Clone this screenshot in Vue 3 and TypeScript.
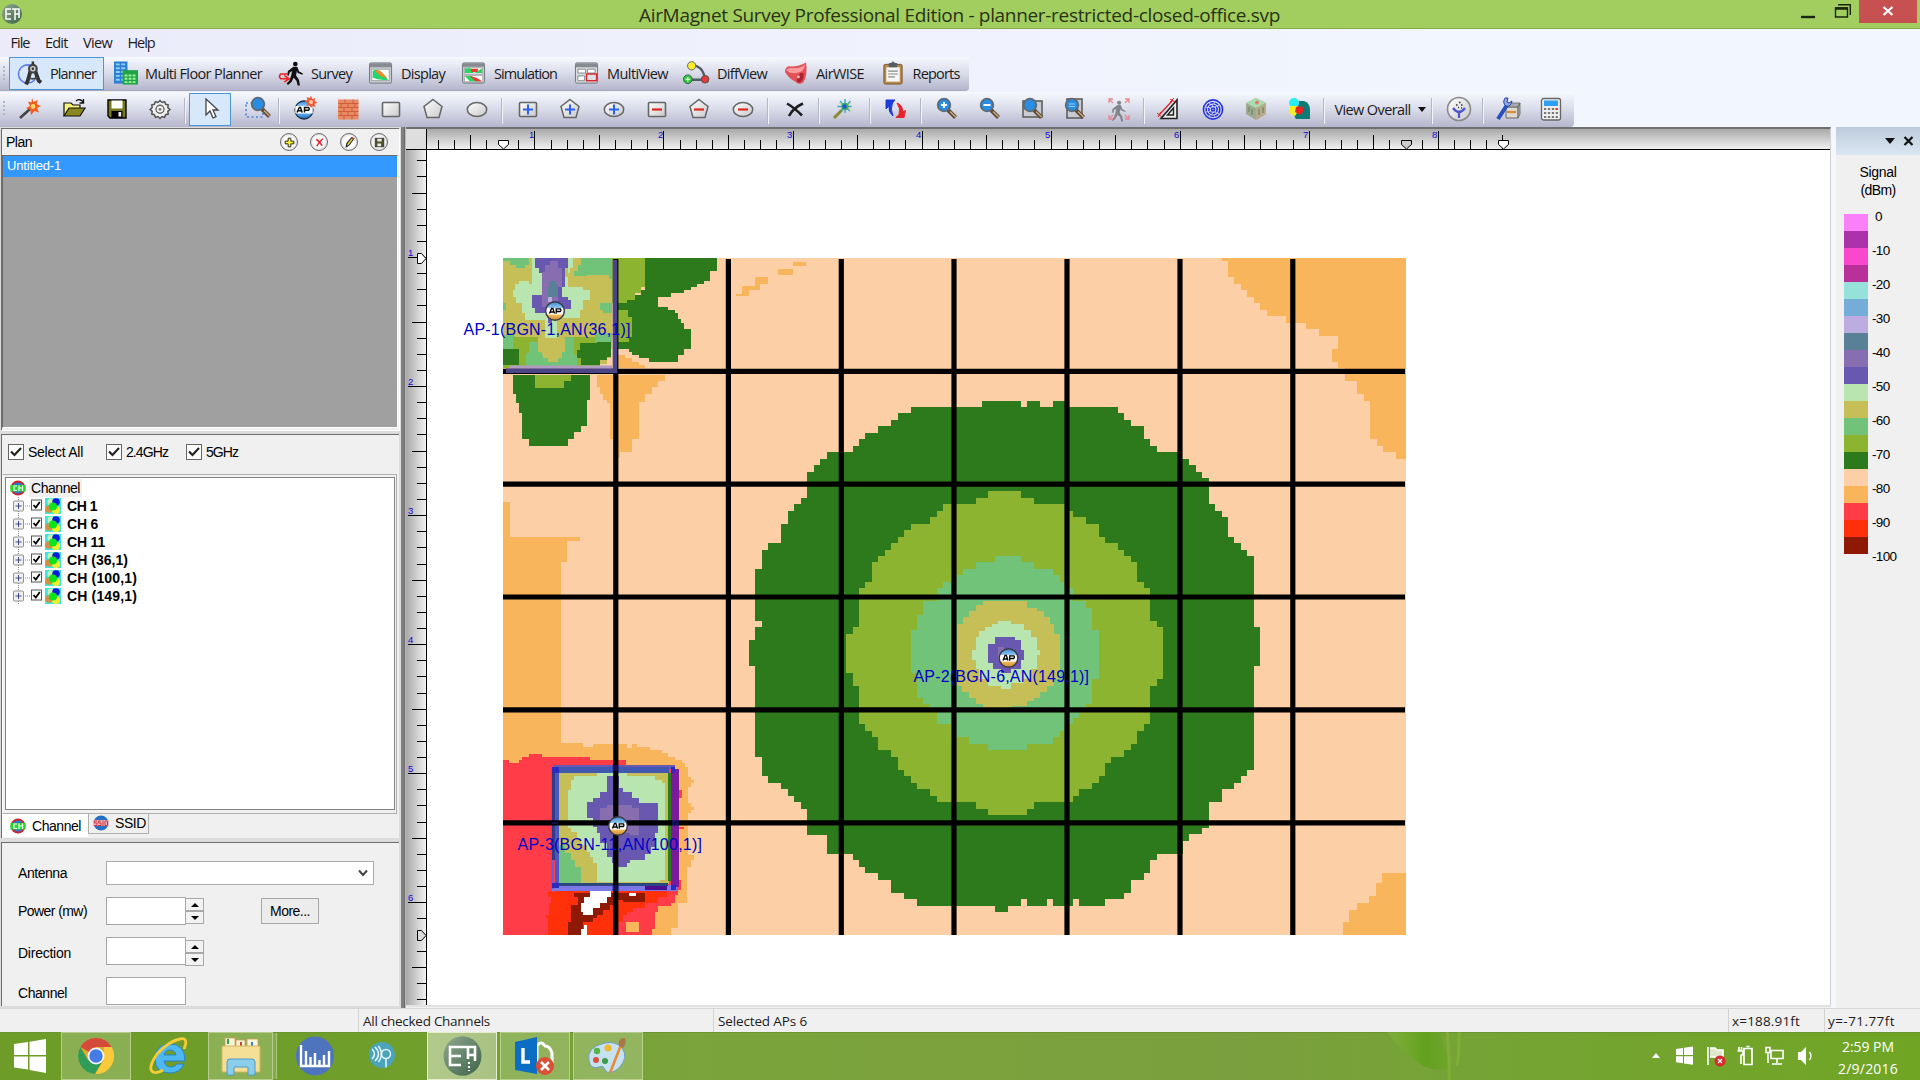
<script setup lang="ts">
import type { Directive } from 'vue'

interface Item { x: number; icon?: string; active?: boolean; kind?: string }

/* Spreads the letters of a label so that it takes exactly the given width. */
const vFit: Directive<HTMLElement, number> = {
  mounted(el, { value }) {
    const n = (el.textContent ?? '').trim().length
    const natural = el.getBoundingClientRect().width
    el.style.letterSpacing = (value - natural) / n + 'px'
  },
}

const plus = '<path d="M12 7.500v10M7 12.500h10" stroke="#2b63f0" stroke-width="2"/>'
const minus = '<path d="M7 12.500h10" stroke="#e0281c" stroke-width="2.200"/>'
const box = '<rect x="3.500" y="5.500" width="17" height="14" rx="1" fill="url(#gShape)" stroke="#666" stroke-width="1.600"/>'
const pent = '<path d="M12 2.500 21 9.500 18 20.500H6L3 9.500Z" fill="url(#gShape)" stroke="#666" stroke-width="1.500"/>'
const oval = '<ellipse cx="12" cy="12.500" rx="9.700" ry="7" fill="url(#gShape)" stroke="#666" stroke-width="1.500"/>'
const lens = '<path d="M13 13l7.500 7.500" stroke="#5b4a38" stroke-width="4"/><path d="M15 14.500l5.500 5.500" stroke="#c9a878" stroke-width="1.600"/><circle cx="9" cy="8" r="6.300" fill="#2a8de4" stroke="#5d6a73" stroke-width="1.800"/>'
const man = '<circle cx="15" cy="2.600" r="2.400"/><path d="M13 5.500h4l2 5 4 2-.6 1.300-5-1.800-.8-2-.8 4.500 3 4.500 1 6h-2.400l-1.200-5-3-3-2 4-3.800 3.500-1.500-1.600 3-3 2-6 .5-4-2.200 1.500-1 3.500-1.700-.5.8-4.500z"/>'
const apBall = '<circle cx="11" cy="13" r="9" fill="url(#gBall)" stroke="#1c2c40" stroke-width="1.300"/><rect x="2.300" y="9" width="17.400" height="7.500" fill="#fff"/><path d="M4 15.500l2.300-5h1.200l1.700 5M5 13.800h3.600M11.500 15.500v-5h4q1.500 1.400 0 2.800h-4" fill="none" stroke="#111" stroke-width="1.500"/>'

const icons: Record<string, string> = {
  planner: '<circle cx="10" cy="13" r="9.500" fill="none" stroke="#5a78ec" stroke-width="1.600"/><path d="M15.500 0v4" stroke="#333" stroke-width="2.600"/><path d="M13 10 10.500 19 8.500 24M18 10l3.500 10 2.500 2" stroke="#333" stroke-width="4" fill="none"/><circle cx="15.500" cy="7.500" r="4" fill="#ccc" stroke="#444" stroke-width="2.200"/><circle cx="15.500" cy="7.500" r="1.300" fill="#333"/><path d="M11 17q5 2.500 10-1" stroke="#444" stroke-width="1.800" fill="none"/>',
  floors: '<rect x="0" y="0" width="14" height="23" fill="#2d7fd2"/><path d="M2 3h10M2 7h10M2 11h10M2 15h10M2 19h10" stroke="#8fd0fa" stroke-width="2" stroke-dasharray="4 1.500"/><rect x="9" y="9" width="16" height="15" fill="#1fa545"/><path d="M11 14.500h12M11 18h12M11 21.500h12" stroke="#a0f29a" stroke-width="2" stroke-dasharray="3 1.200"/>',
  survey: '<g fill="#111" transform="translate(2 0)">' + man + '</g><path d="M9 13H2q-3 2.500 0 5h7M5.500 14.500l5 3.500-5 3.500" fill="none" stroke="#e22" stroke-width="1.700"/>',
  display: '<rect x=".5" y="1.500" width="23" height="21" rx="1.500" fill="#c8cdd2" stroke="#70757a"/><rect x="1" y="2" width="22" height="4" fill="#858b91"/><rect x="3" y="8" width="18" height="12" fill="#fff" stroke="#888" stroke-width=".7"/><path d="M4 10q4-3 9 1l7 8q-10 1-16-2z" fill="#23d66e"/><path d="M6 10q4-2 7 1l6 6q-8-1-9-4z" fill="#f38a2c"/>',
  simulation: '<rect x=".5" y="1.500" width="23" height="21" rx="1.500" fill="#c8cdd2" stroke="#70757a"/><rect x="1" y="2" width="22" height="3.500" fill="#858b91"/><path d="M2.500 6.500h19v6.500h-19zM2.500 14.500h19v6.500h-19z" fill="#fff" stroke="#888" stroke-width=".6"/><path d="M3 7h6l3 5H3zM13 12l8-5v5zM3 15h7l9 5.500H8z" fill="#27d763"/><path d="M9 7.500h8l-1 3.500h-6zM8 15l7 2 6 3.500h-7z" fill="#ee3930"/>',
  multi: '<rect x=".5" y="1.500" width="23" height="21" rx="1.500" fill="#d8dcdf" stroke="#70757a"/><rect x="1" y="2" width="22" height="4" fill="#858b91"/><path d="M3 8h8v4H3zM13 8h8v4h-8zM3 15h7v5H3z" fill="#fff" stroke="#85898d"/><rect x="12" y="13" width="10.500" height="7" fill="#dbe2e4" stroke="#d8242c" stroke-width="1.500"/>',
  diff: '<path d="M8 4q12 0 14 15H4" fill="none" stroke="#4d5c66" stroke-width="2.400"/><circle cx="8" cy="4.500" r="4.300" fill="#ffec2e" stroke="#59624a"/><circle cx="4" cy="18.500" r="4.500" fill="#34c83f" stroke="#375947"/><circle cx="22" cy="18.500" r="4" fill="#e5353e" stroke="#554"/><path d="M4 16v5M1.500 18.500h5" stroke="#fff"/>',
  bell: '<path d="M23 1Q25 14 20 22q-4 3-8-1Q6 19 1 11q0-5 4-6Q14 6 23 1" fill="#e4505a"/><path d="M2 9q3-3 7-2 8 0 13-4-1 6-5 8Q8 14 2 9" fill="#ff9b9c"/><ellipse cx="17" cy="17" rx="3" ry="5.500" fill="#a82231" transform="rotate(25 17 17)"/><circle cx="15" cy="16" r="1.600" fill="#ffb0a8"/>',
  reports: '<rect x="3" y="3" width="19" height="20.500" rx="1.500" fill="#b98a4c" stroke="#76552c"/><rect x="5.500" y="6" width="14" height="15" fill="#f6f6f6"/><path d="M7.500 10h10M7.500 13h10M7.500 16h7" stroke="#888" stroke-width="1.200"/><rect x="8" y="1.500" width="9" height="4.500" rx="1" fill="#56606a"/><circle cx="12.500" cy="1.800" r="1.700" fill="#56606a"/>',
  wand: '<path d="M2 21 12 12" stroke="#444" stroke-width="2.600"/><path d="m14 1 1.500 4L20 3l-1.500 4L23 9l-4 2 2 4.500-4.500-1.500L13 18l-.6-5L8 11l4-2-2-4.500 3.500 1z" fill="#f45a18"/><circle cx="15" cy="9.500" r="2.400" fill="#ffd56a"/>',
  folder: '<path d="M2 19V6h7l2 2h7v3" fill="#f8f37a" stroke="#111" stroke-width="1.200"/><path d="M2 19 7 11h16l-5 8z" fill="#8a8620" stroke="#111" stroke-width="1.200"/><path d="M14 4q4-3 7 1m.5-3v4h-4" fill="none" stroke="#111" stroke-width="1.300"/>',
  save: '<path d="M3 3h18v18H5l-2-2z" fill="#77771c" stroke="#000" stroke-width="1.400"/><rect x="6.500" y="3.500" width="11" height="8" fill="#fff"/><rect x="6.500" y="14" width="11" height="7" fill="#000"/><rect x="13.500" y="15" width="2.700" height="4.500" fill="#eee"/>',
  gear: '<path d="m12 3.500 2 2 2.600-.8 1 2.600 2.600.6-.4 2.700 2.100 1.900-2.100 1.900.4 2.700-2.600.6-1 2.600-2.600-.8-2 2-2-2-2.600.8-1-2.600-2.600-.6.4-2.700-2.100-1.900 2.100-1.900-.4-2.700 2.600-.6 1-2.600 2.600.8z" fill="#f2f2f2" stroke="#555" stroke-width="1.500"/><circle cx="12" cy="12.300" r="4" fill="none" stroke="#666" stroke-width="1.400"/><circle cx="12" cy="12.300" r="1.400" fill="#777"/>',
  cursor: '<path d="M8 2v16l4-4 3 7 3-1.300-3-6.700h5z" fill="#fff" stroke="#444" stroke-width="1.300"/>',
  zoomArea: '<path d="M1 6h17v14H1z" fill="none" stroke="#4a88dc" stroke-width="1.600" stroke-dasharray="2 2.500"/><g transform="translate(4 -1)">' + lens + '</g>',
  ap: apBall + '<path d="m18-1 1.500 3 3-1-1 3 3 1.500-3 1.500 1 3-3-1L18 11l-1.500-3-3 1 1-3-3-1.500 3-1.500-1-3 3 1z" fill="#ee5a3a"/><circle cx="18" cy="5" r="2" fill="#ffc9a0"/>',
  wall: '<rect x="2" y="2.500" width="20.500" height="20" fill="#e98a62"/><path d="M2 6.500h20.500M2 10.500h20.500M2 14.500h20.500M2 18.500h20.500M9 2.500v4M17 2.500v4M5 6.500v4M12 6.500v4M19 6.500v4M8 10.500v4M16 10.500v4M5 14.500v4M12 14.500v4M19 14.500v4M8 18.500v4M16 18.500v4" stroke="#cc5f3e" stroke-width="1"/>',
  rect: box, pent, oval,
  rectPlus: box + plus, pentPlus: pent + plus, ovalPlus: oval + plus,
  rectMinus: box + minus, pentMinus: pent + minus, ovalMinus: oval + minus,
  cross: '<path d="M4 6.500q7 4 15 12M20 6.500Q10 11 6 19" fill="none" stroke="#1c1c1c" stroke-width="2.500"/>',
  spark: '<path d="M3 21 11 13" stroke="#8b8a2a" stroke-width="3"/><path d="M14 2v15M6.500 9.500h15M9 4l10.500 11M19.500 4 9 15" stroke="#3ba0c8" stroke-width="1.300" stroke-dasharray="4 1"/><path d="M8 6l12 7M8 13l12-7" stroke="#d8d25a" stroke-width="1"/><circle cx="14" cy="9.500" r="3.700" fill="#3cb070"/><circle cx="13.500" cy="9.500" r="2.200" fill="#2456c8"/>',
  refresh: '<path d="M10 19Q5 15 6 9l-3 3V3h9L9.500 6q-2.500 6 .5 13" fill="#1c3bd8" stroke="#1c3bd8"/><path d="M14 6q6 2 5.500 9l3-1.500-1.500 7h-8l3-3q2-6-2-11.500" fill="#e8232a" stroke="#e8232a"/>',
  zoomIn: lens + '<path d="M9 5v6M6 8h6" stroke="#fff" stroke-width="1.800"/>',
  zoomOut: lens + '<path d="M5.500 8h7" stroke="#fff" stroke-width="1.900"/>',
  zoomFit: '<rect x="2" y="4" width="19" height="16" fill="#c9cbd2" stroke="#666" stroke-width="1.700"/>' + lens,
  zoomPage: '<rect x="4" y="2" width="15" height="19" fill="#c9cbd2" stroke="#666" stroke-width="1.700"/>' + lens + '<path d="M6 7h6M6 9.500h6" stroke="#9cd0fb"/>',
  walk: '<g fill="#84848c" transform="translate(-.5 3.500) scale(.84)">' + man + '</g><path d="M2 6V2h4M2 2l4 4M18 2h4v4M22 2l-4 4M2 18v4h4M2 22l4-4M18 22h4v-4M22 22l-4-4" fill="none" stroke="#e58a90" stroke-width="1.300"/>',
  angle: '<path d="M21 3v18.500H5z" fill="#ededed" stroke="#222" stroke-width="1.600"/><path d="M17.500 11v7h-6z" fill="none" stroke="#222" stroke-width="1.400"/><path d="M3 18 17 3" stroke="#d8262b" stroke-width="1.300"/><path d="m14 2 5 3M18 1l-4 4M1 16l5 4M5 15l-3 5" stroke="#d8262b"/>',
  rings: '<g fill="none" stroke="#2433e0" stroke-width="1.600"><circle cx="12" cy="12.500" r="9.600"/><circle cx="12" cy="12.500" r="6.800" stroke-dasharray="4 .8"/><circle cx="12" cy="12.500" r="4.200" stroke-dasharray="3 .8"/><circle cx="12" cy="12.500" r="1.500"/></g>',
  cube: '<path d="m12 1 10 5v11l-10 6-10-6V6z" fill="#9cab8f"/><path d="m12 1 10 5-10 5L2 6z" fill="#a9ddb0"/><path d="m12 11 10-5v11l-10 6z" fill="#b9aa8c"/><path d="M5 10v5M8 12v6M15 12v6M19 10v6" stroke="#7c8c70" stroke-width="1.600"/><circle cx="13" cy="5.500" r="2" fill="#e47b70"/>',
  blobs: '<path d="M12 4h5q6 2 6 9v9H9Q5 19 12 4" fill="#0d7a76"/><circle cx="7" cy="6" r="5" fill="#26eef2"/><path d="M3 9h7l2 4-4 6Q1 18 3 9" fill="#f5f020"/><path d="m9 10 6-1 2 5-4 4-5-3z" fill="#ea2322"/>',
  round: '<circle cx="12" cy="12" r="11.500" fill="url(#gShape)" stroke="#8a8a8e" stroke-width="1.600"/><path d="M6 11q3 4 6 4 3 0 6-4M12 15v6" fill="none" stroke="#4b56cf" stroke-width="2.300"/><path d="M9 8h1.500M12 5.500h1.500M14 8h1.500M11 10.500h1M14 11h1" stroke="#333" stroke-width="1.500"/>',
  wrench: '<path d="M10 10h12v11H10z" fill="#dedad2" stroke="#666"/><path d="M10 10 13 6h11l-2 4zM22 10l2-4v11l-2 4z" fill="#aaa" stroke="#666" stroke-width=".8"/><path d="M11 15h9" stroke="#d68b33" stroke-width="2.200"/><path d="M2 22 11 8" stroke="#2c4fc0" stroke-width="4"/><path d="M9 1q-3 5 1 8 5 1 6-5l-3 2-2-1 1-4z" fill="#8fa7ea" stroke="#27439f"/>',
  calc: '<rect x="2.500" y="1.500" width="19" height="21.500" rx="2" fill="#eee" stroke="#666" stroke-width="1.300"/><rect x="5" y="3.500" width="14" height="5.500" fill="#2f9ff2"/><path d="M5 12h14M5 16h14M5 20h14" stroke="#777" stroke-width="2" stroke-dasharray="2.200 1.700"/><path d="M16.500 12h2.500" stroke="#e33" stroke-width="2"/>',
  add: '<path d="M9.500 4h5v5.500H20v5h-5.500V20h-5v-5.500H4v-5h5.500z" fill="#fcf72c" stroke="#222" stroke-width="1.800"/>',
  del: '<path d="M6 6q6 4 11 12M18 5Q10 12 7 19" fill="none" stroke="#e21f2a" stroke-width="2.800"/>',
  edit: '<path d="m6 20 1-6 9-11 4 2-9 12z" fill="#ecd84a" stroke="#222" stroke-width="2"/><path d="m15 4 2-2 4 3-2 2z" fill="#b43"/>',
  disk: '<path d="M4 4h16v16H4z" fill="#4f4f2c" stroke="#111"/><path d="M8 5h8v5H8zM8 14h7v5H8z" fill="#e4e9ee"/>',
}

const menus: [string, number, number][] = [['File', 10.5, 19], ['Edit', 45, 22.5], ['View', 83, 29], ['Help', 127.5, 27]]

const modes: [string, string, number, number, number][] = [
  ['planner', 'Planner', 18, 50, 46], ['floors', 'Multi Floor Planner', 114, 145, 117],
  ['survey', 'Survey', 279, 311, 41], ['display', 'Display', 369, 401, 44],
  ['simulation', 'Simulation', 462, 494, 63], ['multi', 'MultiView', 575, 607, 61],
  ['diff', 'DiffView', 684, 717, 50], ['bell', 'AirWISE', 784, 816, 48], ['reports', 'Reports', 881, 912.5, 47],
]

const tools: Item[] = [
  { x: 30, icon: 'wand' }, { x: 74, icon: 'folder' }, { x: 117, icon: 'save' }, { x: 160, icon: 'gear' }, { x: 185, kind: 'sep' },
  { x: 210, icon: 'cursor', active: true }, { x: 257, icon: 'zoomArea' }, { x: 279, kind: 'sep' },
  { x: 305, icon: 'ap' }, { x: 348, icon: 'wall' }, { x: 390.5, icon: 'rect' }, { x: 433, icon: 'pent' }, { x: 477, icon: 'oval' }, { x: 502, kind: 'sep' },
  { x: 527.5, icon: 'rectPlus' }, { x: 570, icon: 'pentPlus' }, { x: 614, icon: 'ovalPlus' }, { x: 657, icon: 'rectMinus' }, { x: 699, icon: 'pentMinus' }, { x: 743, icon: 'ovalMinus' }, { x: 768, kind: 'sep' },
  { x: 794.5, icon: 'cross' }, { x: 819, kind: 'sep' }, { x: 843, icon: 'spark' }, { x: 870, kind: 'sep' }, { x: 895, icon: 'refresh' }, { x: 921, kind: 'sep' },
  { x: 946.5, icon: 'zoomIn' }, { x: 989.5, icon: 'zoomOut' }, { x: 1032.5, icon: 'zoomFit' }, { x: 1075, icon: 'zoomPage' }, { x: 1118.5, icon: 'walk' }, { x: 1144, kind: 'sep' },
  { x: 1168, icon: 'angle' }, { x: 1212.5, icon: 'rings' }, { x: 1255.5, icon: 'cube' }, { x: 1298.5, icon: 'blobs' }, { x: 1324, kind: 'sep' },
  { x: 1380, kind: 'view' }, { x: 1432, kind: 'sep' }, { x: 1458.5, icon: 'round' }, { x: 1483, kind: 'sep' }, { x: 1508, icon: 'wrench' }, { x: 1551, icon: 'calc' },
]
const sizeOf = (t: Item) => (t.kind === 'sep' ? 2 : t.kind === 'view' ? 91 : t.active ? 42 : 24)
let edge = 0
const placed = tools.map((t) => {
  const left = t.x - sizeOf(t) / 2
  const gap = left - edge
  edge = left + sizeOf(t)
  return { ...t, gap, size: sizeOf(t) }
})
edge = 0
const placedMenus = menus.map(([label, x, w]) => { const gap = x - edge; edge = x + w; return { label, w, gap } })
edge = 0
const placedModes = modes.map(([icon, label, x, tx, w]) => { const gap = x - 9 - edge; edge = tx + w + 8; return { icon, label, gap, w, pad: tx - x - 24, width: edge - x + 9 } })

const channels: [string, number][] = [['CH 1', 30], ['CH 6', 31], ['CH 11', 38], ['CH (36,1)', 61], ['CH (100,1)', 70], ['CH (149,1)', 70]]
const checks: [string, number, number][] = [['Select All', 55, 98], ['2.4GHz', 42, 80], ['5GHz', 32, 80]]

const legend = ['#fa80fa', '#ac32ac', '#fa48cc', '#b83098', '#96e2da', '#74aed6', '#bcace0', '#5a8098', '#866eb0', '#6858b0', '#b9e5b0', '#c6be56', '#72c37a', '#8db430', '#2d7a1c', '#fdcfa6', '#f8b55c', '#ff3c48', '#ff300a', '#8e1804']
const legendLabels: [string, number][] = [['0', 5], ['-10', 17.5], ['-20', 17.5], ['-30', 17.5], ['-40', 17.5], ['-50', 17.5], ['-60', 17.5], ['-70', 17.5], ['-80', 17.5], ['-90', 17.5], ['-100', 24.5]]

const tickLen = (i: number) => (i % 8 === 0 ? 18 : i % 8 === 4 ? 14 : 9)
const hTicks = Array.from({ length: 67 }, (_, k) => k + 2).map((i) => ({ i, p: Math.round(406.4 + i * 16.13), l: tickLen(i) })).filter((t) => ![6, 62].includes(t.i))
const vTicks = Array.from({ length: 53 }, (_, k) => k + 2).map((i) => ({ i, p: Math.round(128 + i * 16.13), l: tickLen(i) })).filter((t) => t.i !== 50)

const C = { dark: '#2d7a1c', olive: '#8db430', mid: '#72c37a', khaki: '#c6be56', pale: '#b9e5b0', violet: '#6858b0', lav: '#866eb0', teal: '#5a8098', sand: '#fdcfa6', orange: '#f8b55c', red: '#ff3c48', hot: '#ff300a', brown: '#8e1a06', white: '#fff' }

const centre: [string, string][] = [
  [C.dark, 'M703 33H816V50H833V33H871V50H909V33H945V50H1098V69H1115V89H1135V107H1173V145H1191V166H1211V183H1275V204H1304V222H1324V243H1342V261H1362V338H1380V358H1399V376H1417V435H1434V453H1455V473H1472V491H1493V701H1510V817H1493V1124H1472V1142H1455V1162H1434V1180H1400V1219H1362V1297H1342V1315H1304V1333H1285V1373H1211V1390H1191V1429H1173V1450H1135V1488H1115V1506H1060V1527H984V1506H967V1527H909V1506H891V1527H833V1506H816V1527H778V1544H740V1527H514V1506H476V1488H438V1450H401V1429H363V1411H346V1390H328V1373H253V1317H195V1240H177V1219H157V1200H139V1180H119V1162H81V1142H64V1086H44V817H26V740H44V701H64V683H44V530H64V473H81V453H119V396H139V358H157V338H177V320H195V243H215V222H233V204H253V183H328V166H346V145H363V127H401V107H438V89H459V69H497V50H703Z'],
  [C.olive, 'M720 299H816V320H854V338H945V358H967V376H1005V396H1042V435H1060V453H1098V473H1115V491H1135V510H1153V568H1173V587H1191V683H1211V701H1228V854H1211V876H1191V988H1173V1010H1153V1047H1135V1065H1115V1086H1078V1104H1060V1142H1042V1162H1022V1180H984V1200H967V1219H854V1240H833V1257H720V1240H685V1219H572V1200H552V1180H514V1162H497V1142H476V1124H459V1086H438V1065H401V1028H383V1010H363V988H346V876H328V837H308V721H328V701H346V587H363V568H383V510H401V491H420V473H438V453H459V435H476V415H497V396H552V376H572V358H590V338H685V320H720Z'],
  [C.mid, 'M740 491H816V510H854V530H909V548H929V568H947V587H967V625H1005V645H1022V710H1042V854H1022V930H1005V942H984V970H967V988H947V1010H929V1028H909V1047H833V1065H720V1047H665V1028H612V988H572V942H552V930H532V912H514V837H497V710H514V665H532V625H572V587H590V568H612V548H648V530H685V510H740Z'],
  [C.khaki, 'M705 625H833V645H862V655H883V673H900V692H912V721H929V854H912V876H891V893H871V912H854V920H833V936H790V942H705V930H685V912H665V893H645V876H630V692H648V673H665V655H685V635H705Z'],
  [C.pale, 'M749 683H788V692H825V710H845V730H862V770H870V785H862V825H845V854H825V868H788V885H757V876H720V854H695V825H685V798H674V770H685V730H695V712H712V700H733V692H749Z'],
  [C.violet, 'M740 730H798V740H816V770H825V800H816V825H788V837H757V825H735V808H720V750H740Z'],
  [C.lav, 'M749 760H768V800H749Z'],
]
const northWest: [string, string][] = [
  [C.orange, 'M655 345H676V355H697V365H716V375H736V385H655ZM590 404H795V422H774V442H755V462H735V485H716V597H697V636H660V655H655V597H630V490H620V480H610V462H600V442H590Z'],
  [C.dark, 'M735 54H951V93H930V122H912V132H891V142H873V151H853V160H813V170H774V200H805V209H824V219H833V236H843V248H853V268H873V326H853V345H834V365H747V355H716V345H697V335H687V326H655V190H680V180H706V165H724V150H735Z'],
  [C.olive, 'M636 54H735V142H724V160H706V180H680V190H636ZM655 209H684V230H697V290H687V306H655Z'],
  [C.dark, 'M338 404H570V480H561V558H543V577H523V597H504V618H387V597H366V520H357V490H348V462H338Z'],
  [C.olive, 'M405 404H513V422H492V443H405Z'],
  [C.khaki, 'M309 54H636V385H309Z'],
  [C.mid, 'M309 54H387V75H375V83H348V75H330V64H309ZM543 54H636V118H628V105H560V108H523V93H535V75H543ZM600 190H636V220H610V210H600ZM309 190H318V210H309ZM309 285H345V326H309Z'],
  [C.olive, 'M338 290H415V385H309V326H338ZM485 290H600V385H485Z'],
  [C.mid, 'M387 305H415V290H425V345H485V330H495V290H523V345H540V355H530V385H377V340H387ZM585 280H636V305H585Z'],
  [C.khaki, 'M415 285H495V335H485V355H475V365H445V355H430V335H415Z'],
  [C.dark, 'M309 326H357V375H309ZM540 310H590V305H633V350H622V360H600V375H543V355H530V330H540Z'],
  [C.sand, 'M636 326H645V385H600V373H622V355H633V326Z'],
  [C.pale, 'M397 54H417V100H427V150H440V240H375V220H366V190H348V170H338V150H345V132H357V122H387V132H397ZM504 54H520V83H510V100H504V140H550V150H570V180H550V210H540V235H480V110H504ZM435 235H470V295H435Z'],
  [C.violet, 'M405 54H504V83H495V142H485V170H503V180H513V208H495V218H405V205H397V165H427V100H417V83H405ZM443 235H457V249H443Z'],
  [C.lav, 'M450 63H473V83H485V142H475V200H427V95H435V75H450Z'],
  [C.teal, 'M448 122H467V132H473V170H443V142H448Z'],
  ['#bcace0', 'M443 170H455V185H443Z'],
]
const southWest: [string, string][] = [
  [C.orange, 'M309 0H483V40H550V50H580V43H680V53H697V43H710V50H750V60H785V70H805V80H825V90H845V100H855V110H863V140H873V149H882V158H873V170H863V220H873V230H882V240H873V250H863V375H882V390H873V410H862V518H834V595H813V615H309Z'],
  [C.red, 'M309 90H327V98H357V90H366V80H387V72H427V80H570V90H678V105H825V120H835V180H845V205H835V290H852V298H835V450H843V480H835V495H825V518H813V528H774V545H765V597H755V615H309Z'],
  [C.hot, 'M443 485H465V480H800V500H774V518H735V535H700V545H680V555H670V575H655V615H443V565H437V555H447V518H453V500H443Z'],
  [C.brown, 'M523 488H735V515H670V510H650V525H630V540H610V555H590V565H578V575H550V615H504V575H513V525H533V500H523Z'],
  [C.white, 'M570 483H633V500H620V518H600V535H580V555H550V545H543V520H553V500H570ZM553 585H561V615H543V597H553ZM688 490H708V498H688Z'],
  [C.orange, 'M678 575H718V605H678Z'],
  [C.khaki, 'M478 128H806V462H478Z'],
  [C.pale, 'M523 138H590V128H680V138H765V150H785V160H795V450H780V455H590V400H580V380H570V365H560V345H543V325H530V305H513V295H504V180H513V150H523Z'],
  [C.mid, 'M478 345H495V370H513V390H525V410H543V462H478Z'],
  [C.violet, 'M620 138H658V175H670V185H697V205H716V220H774V310H765V350H753V372H735V390H690V400H680V410H655V400H635V380H620V340H600V310H590V290H580V265H561V215H580V205H600V185H620Z'],
  [C.lav, 'M600 235H620V225H697V235H716V315H690V310H660V300H630V270H600Z'],
  [C.dark, 'M805 128H814V452H805Z'],
  ['#7c78e8', 'M456 465H830V482H456Z'], ['#2b477f', 'M466 460H804V468H466Z'], ['#4a1090', 'M735 468H800V480H735Z'],
  ['#6a58b8', 'M463 105H825V116H463Z'], ['#4058b0', 'M463 112H806V128H463Z'],
  ['#6a60d8', 'M454 112H463V478H454Z'], ['#2f3d88', 'M456 118H466V390H456Z'], ['#4a58c0', 'M466 120H478V465H466Z'],
  ['#7c1a9c', 'M814 118H836V470H814Z'], ['#2a2ac0', 'M457 112H476V128H457ZM812 110H826V128H812ZM812 464H828V480H812ZM457 458H476V475H457Z'],
]
const northEast: [string, string][] = [
  [C.orange, 'M126 54H678V657H648V636H609V618H591V597H570V483H552V462H531V423H495V384H474V366H456V327H474V288H417V267H378V249H318V228H261V210H240V189H222V171H201V150H183V132H162V111H144V63H126Z'],
]
const lone = 'M503 502H510V537H580V541H567V562H561V735H503ZM793 262H806V266H793ZM768 269H778V275H793V269H768ZM755 277H768V284H760V290H749V296H736V302H736V294H742V286H755ZM1406 873V935H1343V922H1349V910H1357V903H1369V896H1376V883H1382V873Z'
const vLines = [615.8, 728.4, 841.3, 954, 1067, 1180, 1292.8]
const hLines = [371.3, 484.2, 597, 709.8, 822.8]
const aps = [
  { x: 555, y: 311, tx: 463.5, ty: 335, w: 167, t: 'AP-1(BGN-1,AN(36,1)]' },
  { x: 1008.5, y: 658, tx: 913.5, ty: 682, w: 175.5, t: 'AP-2(BGN-6,AN(149,1)]' },
  { x: 618, y: 826, tx: 517.5, ty: 850, w: 184.5, t: 'AP-3(BGN-11,AN(100,1)]' },
]
</script>

<template>
  <div class="window">
    <svg class="defs" width="0" height="0">
      <defs>
        <linearGradient id="gShape" x1="0" y1="0" x2="1" y2="1"><stop offset="0" stop-color="#fff" /><stop offset="1" stop-color="#c9c9cc" /></linearGradient>
        <linearGradient id="gBall" x1="0" y1="0" x2="0" y2="1"><stop offset="0" stop-color="#2b86e0" /><stop offset=".3" stop-color="#9cd0f4" /><stop offset=".7" stop-color="#5fb0ee" /><stop offset="1" stop-color="#2065b8" /></linearGradient>
        <linearGradient id="gAp" x1="0" y1="0" x2="0" y2="1"><stop offset="0" stop-color="#3a82d0" /><stop offset=".32" stop-color="#8cc8f0" /><stop offset=".33" stop-color="#fff" /><stop offset=".68" stop-color="#fff" /><stop offset=".7" stop-color="#f6bc5c" /><stop offset="1" stop-color="#c88a30" /></linearGradient>
        <linearGradient id="gEta" x1="0" y1="0" x2="1" y2="1"><stop offset="0" stop-color="#8fa890" /><stop offset="1" stop-color="#3d6448" /></linearGradient>
      </defs>
    </svg>

    <header class="titlebar">
      <svg class="logo" width="20" height="20" viewBox="0 0 20 20"><circle cx="10" cy="10" r="10" fill="url(#gEta)" /><path d="M9 5H4v10h5M4 10h5M10 5h7v9M13 5v11M13 10h4" fill="none" stroke="#fff" stroke-width="1.500" /></svg>
      <div class="title"><span v-fit="641">AirMagnet Survey Professional Edition - planner-restricted-closed-office.svp</span></div>
      <div class="winbtns">
        <svg width="58" height="25"><path d="M0 17h14" stroke="#1c2410" stroke-width="2.400" /><path d="M34.500 8h12v9h-12z" fill="none" stroke="#1c2410" stroke-width="1.400" /><path d="M34 8.500h13" stroke="#1c2410" stroke-width="2.500" /><path d="M37 4.700h12.300V15" fill="none" stroke="#1c2410" stroke-width="1.400" /></svg>
        <div class="close"><svg width="12" height="10"><path d="M1.500 1l9 8M10.500 1l-9 8" stroke="#fff" stroke-width="2.200" /></svg></div>
      </div>
    </header>

    <div class="bars">
      <nav class="menu"><span v-for="m in placedMenus" :key="m.label" v-fit="m.w" :style="{ marginLeft: m.gap + 'px' }">{{ m.label }}</span></nav>
      <div class="strip modes">
        <div v-for="(m, i) in placedModes" :key="m.label" class="mode" :class="{ on: i === 0 }" :style="{ marginLeft: m.gap + 'px', width: m.width + 'px' }">
          <svg width="25" height="25" viewBox="0 0 25 25" v-html="icons[m.icon]" />
          <span v-fit="m.w" :style="{ marginLeft: m.pad + 'px' }">{{ m.label }}</span>
        </div>
      </div>
      <div class="strip tools">
        <div v-for="t in placed" :key="t.x" class="tool" :class="[t.kind, { on: t.active }]" :style="{ marginLeft: t.gap + 'px', width: t.size + 'px' }">
          <svg v-if="t.icon" width="24" height="24" viewBox="0 0 24 24" v-html="icons[t.icon]" />
          <template v-if="t.kind === 'view'"><span v-fit="76">View Overall</span><i class="down"></i></template>
        </div>
      </div>
    </div>

    <main class="work">
      <aside class="side">
        <section class="plan">
          <div class="planhead">
            <span v-fit="26">Plan</span>
            <div class="planbtns"><b v-for="n in ['add', 'del', 'edit', 'disk']" :key="n"><svg width="13" height="13" viewBox="0 0 24 24" v-html="icons[n]" /></b></div>
          </div>
          <div class="planlist"><div class="planrow"><span v-fit="54">Untitled-1</span></div></div>
        </section>

        <section class="filter">
          <div class="checks">
            <label v-for="c in checks" :key="c[0]" :style="{ width: c[2] + 'px' }">
              <svg width="16" height="16"><rect x=".5" y=".5" width="15" height="15" fill="#fff" stroke="#666" /><path d="M3 7.500 6.500 11 13 4" fill="none" stroke="#222" stroke-width="2.200" /></svg>
              <span v-fit="c[1]">{{ c[0] }}</span>
            </label>
          </div>
          <div class="tabbox">
            <div class="tree">
              <div class="root"><svg width="16" height="16"><circle cx="8" cy="8" r="7.500" fill="#cc2630" /><circle cx="8" cy="8" r="5.500" fill="#2b78d8" /><rect x=".5" y="5" width="15" height="6.500" fill="#1fdc28" /><path d="M7 6H4v4.500h3M9 5.500v5.500M12.500 5.500v5.500M9 8h3.500" fill="none" stroke="#fff" stroke-width="1.200" /></svg><em><span v-fit="49">Channel</span></em></div>
              <div v-for="c in channels" :key="c[0]" class="node">
                <svg width="50" height="18">
                  <path d="M5.500 0v18M12 9h6" stroke="#888" stroke-dasharray="1 1" /><rect x=".5" y="4" width="10" height="10" rx="1" fill="#f0f0f0" stroke="#919191" /><path d="M2.500 9h6M5.500 6v6" stroke="#3a4c8a" />
                  <rect x="18.500" y="3" width="10" height="10" fill="#fff" stroke="#555" /><path d="M20.500 8l2.300 2.500 4-5.500" fill="none" stroke="#000" stroke-width="1.800" />
                  <rect x="32" y="1" width="16" height="16" fill="#3ce4e4" /><circle cx="38" cy="5" r="3.500" fill="#c8f0b0" /><circle cx="43" cy="5" r="3.800" fill="#0c1cdc" /><circle cx="36" cy="12" r="3.800" fill="#d09048" /><circle cx="43" cy="13" r="4" fill="#f4f028" /><circle cx="40" cy="9.500" r="4" fill="#0ce41c" />
                </svg>
                <strong v-fit="c[1]">{{ c[0] }}</strong>
              </div>
            </div>
          </div>
          <div class="tabs">
            <div class="tab sel"><svg width="16" height="16"><circle cx="8" cy="8" r="7.500" fill="#cc2630" /><circle cx="8" cy="8" r="5.500" fill="#2b78d8" /><rect x=".5" y="5" width="15" height="6.500" fill="#1fdc28" /><path d="M7 6H4v4.500h3M9 5.500v5.500M12.500 5.500v5.500M9 8h3.500" fill="none" stroke="#fff" stroke-width="1.200" /></svg><span v-fit="49">Channel</span></div>
            <div class="tab"><svg width="16" height="16"><circle cx="8" cy="8" r="7.500" fill="#2371c4" /><rect x="0" y="5" width="16" height="6" fill="#e8b8c4" /><path d="M4 6H1.500v2H4v2.500H1M8 6H5.500v2H8v2.500H5M10 5.500v5.500M12 6v4.500h2.500v-4.500z" fill="none" stroke="#d0343c" stroke-width="1" /></svg><span v-fit="31">SSID</span></div>
          </div>
        </section>

        <section class="form">
          <div class="frow r1"><span class="lab"><span v-fit="49">Antenna</span></span><div class="combo"><svg width="10" height="8"><path d="M1 1.500l4 4.500 4-4.500" fill="none" stroke="#444" stroke-width="2" /></svg></div></div>
          <div class="frow r2"><span class="lab"><span v-fit="69">Power (mw)</span></span><div class="field"></div><div class="spin"><i class="u"></i><i class="d"></i></div><button><span v-fit="40">More...</span></button></div>
          <div class="frow r3"><span class="lab"><span v-fit="53">Direction</span></span><div class="field"></div><div class="spin low"><i class="u"></i><i class="d"></i></div></div>
          <div class="frow r4"><span class="lab"><span v-fit="49">Channel</span></span><div class="field"></div></div>
        </section>
      </aside>

      <div class="splitter"></div>

      <div class="canvas">
        <div class="hrow">
          <svg class="corner" width="21" height="21"><path d="M20.500 0v21M0 20.500h21" stroke="#000" /></svg>
          <svg class="hruler" width="1403" height="21" viewBox="427 129 1403 21">
            <path d="M427 149.500h1403" stroke="#000" />
            <path v-for="t in hTicks" :key="t.i" :d="`M${t.p - 0.5} 149v-${t.l}`" stroke="#000" />
            <text v-for="n in 8" :key="n" :x="529 + (n - 1) * 129" y="138">{{ n }}</text>
            <path d="M498.500 140.500h10v4l-5 4.500-5-4.500zM1498.500 140.500h10v4l-5 4.500-5-4.500z" fill="#fff" stroke="#000" /><path d="M1401.500 140.500h10v4l-5 4.500-5-4.500z" fill="#ccc" stroke="#000" />
          </svg>
        </div>
        <div class="vrow">
          <svg class="vruler" width="21" height="855" viewBox="406 150 21 855">
            <path d="M426.500 150v855" stroke="#000" />
            <path v-for="t in vTicks" :key="t.i" :d="`M426 ${t.p + 0.5}h-${t.l}`" stroke="#000" />
            <text v-for="n in 6" :key="n" x="408" :y="255.500 + (n - 1) * 129">{{ n }}</text>
            <path d="M417.500 253.500h4l4.500 5-4.500 5h-4z" fill="#fff" stroke="#000" /><path d="M417.500 930.500h4l4.500 5-4.500 5h-4z" fill="#ddd" stroke="#000" />
          </svg>
          <svg class="map" width="1403" height="855" viewBox="427 150 1403 855">
            <rect x="503" y="258" width="903" height="677" fill="#fdcfa6" />
            <g shape-rendering="crispEdges">
              <path :d="lone" fill="#f8b55c" />
              <g transform="translate(1180 240) scale(.33333)"><path v-for="(p, i) in northEast" :key="i" :fill="p[0]" :d="p[1]" /></g>
              <g transform="translate(740 390) scale(.34439 .33801)"><path v-for="(p, i) in centre" :key="i" :fill="p[0]" :d="p[1]" /></g>
              <g transform="translate(400 240) scale(.33333)"><path v-for="(p, i) in northWest" :key="i" :fill="p[0]" :d="p[1]" /></g>
              <g transform="translate(400 730) scale(.33333)"><path v-for="(p, i) in southWest" :key="i" :fill="p[0]" :d="p[1]" /></g>
            </g>
            <g stroke="#000" stroke-width="5.200">
              <path v-for="x in vLines" :key="x" :d="`M${x} 259V935`" />
              <path v-for="y in hLines" :key="y" :d="`M503 ${y}H1405`" />
            </g>
            <path d="M509 367H612" stroke="#b09cc0" stroke-width="3" />
            <path d="M506 370.700H615V260" fill="none" stroke="#4b4588" stroke-width="4.600" />
            <g fill="none" stroke="#2424b0" stroke-width="6" stroke-opacity=".45"><path d="M612 768H619M612 888H619M555 822V824M672 823H679" /></g>
            <g v-for="a in aps" :key="a.t">
              <circle :cx="a.x" :cy="a.y" r="9.300" fill="url(#gAp)" stroke="#3b3b46" stroke-width="1.400" />
              <path :transform="`translate(${a.x} ${a.y})`" d="M-5.500 2.500l2-5h1.400l1.600 5M-5 1h4.200M1.200 2.800v-5h4q1.400 1.300 0 2.700h-4" fill="none" stroke="#000" stroke-width="1.300" />
              <text class="aplabel" :x="a.tx" :y="a.ty" :textLength="a.w">{{ a.t }}</text>
            </g>
          </svg>
        </div>
      </div>

      <aside class="dock">
        <div class="dockhead"><i class="down big"></i><svg width="11" height="10"><path d="M1.500 1l8 8M9.500 1l-8 8" stroke="#111" stroke-width="2.200" /></svg></div>
        <div class="unit"><span v-fit="37">Signal</span><span v-fit="35">(dBm)</span></div>
        <div class="legend">
          <div class="swatches"><i v-for="c in legend" :key="c" :style="{ background: c }"></i></div>
          <div class="nums"><div v-for="l in legendLabels" :key="l[0]" :class="{ zero: l[0] === '0' }"><span v-fit="l[1]">{{ l[0] }}</span></div></div>
        </div>
      </aside>
    </main>

    <footer class="status">
      <div class="s1"></div><div class="s2"><span v-fit="127">All checked Channels</span></div><div class="s3"><span v-fit="89">Selected APs 6</span></div>
      <div class="s4"><span v-fit="68">x=188.91ft</span></div><div class="s5"><span v-fit="67">y=-71.77ft</span></div>
    </footer>

    <div class="taskbar">
      <div class="task start"><svg width="32" height="34"><path d="M0 5l14-2v13H0zM15.500 2.800 32 0v16H15.500zM0 17.500h14v13L0 28.500zM15.500 17.500H32V34l-16.500-3z" fill="#fff" /></svg></div>
      <div class="task btn b1"><svg width="36" height="36" viewBox="0 0 36 36"><circle cx="18" cy="18" r="18" fill="#e0a92c" /><path d="M18 18 2.400 9A18 18 0 0 1 33.600 9H18z" fill="#d64a3b" /><path d="M33.600 9A18 18 0 0 1 17 36l9-14V9z" fill="#fac93a" /><path d="M10 22 2.400 9A18 18 0 0 0 17 36l8-14z" fill="#2f9c57" /><circle cx="18" cy="18" r="8.500" fill="#f4f4f4" /><circle cx="18" cy="18" r="6.700" fill="#447ce6" /></svg></div>
      <div class="task ie"><svg width="40" height="38" viewBox="0 0 40 38"><path d="M36 24H15q1 6 7 6 4 0 6-3h7q-4 9-14 9Q6 36 6 21.500 7 7 21 7q15 0 15 17M15 18h12q-1-5-6-5t-6 5" fill="#4db8f2" fill-rule="evenodd" stroke="#2b83cc" /><path d="M35 12Q40 0 31 2 20 4 8 17-2 32 4 35q4 2 10-2" fill="none" stroke="#f5cb37" stroke-width="2.800" /></svg></div>
      <div class="task btn b2"><svg width="40" height="38" viewBox="0 0 40 38"><path d="M4 1h10v9H4zM15 3h9v7h-9zM26 2h11v8H26z" fill="#faf3da" stroke="#c89d50" stroke-width=".8" /><path d="M7 2v5" stroke="#28a048" stroke-width="2" /><path d="M20 5v4" stroke="#cf4332" stroke-width="2" /><path d="M31 5v4" stroke="#2e86cc" stroke-width="2" /><rect x="1" y="9" width="38" height="26" rx="1" fill="#f5df96" stroke="#d8b65c" /><path d="M6 38V25q0-3 3-3h22q3 0 3 3v13h-7v-8H13v8z" fill="#8ccdec" stroke="#4a9ac8" /></svg></div>
      <div class="task pulse"><svg width="38" height="40" viewBox="0 0 38 40"><ellipse cx="19" cy="20" rx="19" ry="19.500" fill="#4e74bd" /><path d="M5 9v21h28V15M10 30V15M14.500 30V21M19 30V17M23.500 30V24M28 30V19" fill="none" stroke="#fff" stroke-width="2.400" /></svg></div>
      <div class="task radar"><svg width="26" height="28" viewBox="0 0 26 28"><ellipse cx="13" cy="13" rx="13" ry="13" fill="#4ba4bb" /><g fill="none" stroke="#e6f6fb" stroke-width="1.500"><circle cx="17" cy="12" r="4.500" /><path d="M17 16.500v9M3 7q5 5 0 10M6 5q7 7 0 14M9.500 4q6 8 0 16" /></g></svg></div>
      <div class="task btn b3"><svg width="39" height="40" viewBox="0 0 39 40"><ellipse cx="19.500" cy="20" rx="19" ry="19.700" fill="url(#gEta)" /><path d="M18 11H7v18h11M7 20h11M18 11h14v14M25 11v12M25 19h7" fill="none" stroke="#fff" stroke-width="2.600" /><path d="M26 26v9" stroke="#fff" stroke-width="2" stroke-dasharray="2 2" /></svg></div>
      <div class="task btn b4"><svg width="40" height="38" viewBox="0 0 40 38"><path d="M22 9q4-6 8 0 5 0 7 7v9H22z" fill="none" stroke="#fff" stroke-width="3" /><path d="M0 5 22 0v37L0 33z" fill="#0b6ec4" /><path d="M8 11v14h7" fill="none" stroke="#fff" stroke-width="3.400" /><circle cx="30" cy="29" r="9" fill="#d95037" /><path d="m26 25 8 8M34 25l-8 8" stroke="#fff" stroke-width="2.500" /></svg></div>
      <div class="task btn b5"><svg width="40" height="38" viewBox="0 0 40 38"><path d="M17 6Q-2 10 1 24q2 9 10 6 5-2 6 3 4 6 14-2 10-11 3-20-6-7-17-5" fill="#c6e2f1" stroke="#6aa0be" /><circle cx="9" cy="14" r="3.200" fill="#57b545" /><circle cx="8" cy="23" r="3" fill="#d8503e" /><circle cx="20" cy="11" r="3.600" fill="#f0b92e" /><circle cx="17" cy="24" r="3" fill="#3a9b4c" /><path d="M22 36 33 8" stroke="#e58a35" stroke-width="2.600" /><path d="M31 9q-2-8 6-8 2 4-2 10z" fill="#a97749" /></svg></div>
      <svg class="leaf" width="110" height="48"><defs><linearGradient id="gLeaf" x1="0" y1="0" x2="1" y2="0"><stop offset="0" stop-color="#82b53a" stop-opacity=".5" /><stop offset=".6" stop-color="#62a01e" /><stop offset="1" stop-color="#6fa42c" /></linearGradient></defs><path d="M6 0H58Q66 20 68 36 58 40 42 34 20 20 6 0" fill="url(#gLeaf)" /><path d="M66 0q3 24 2 48M78 0q0 24-2 34" fill="none" stroke="#86b335" stroke-width="3" opacity=".7" /></svg>
      <svg class="tray" width="164" height="24" viewBox="0 0 164 24"><path d="M1 14l4-5 4 5z" fill="#fff" /><path d="M25 5l7-1v7h-7zM33 3.800l9-1.300V11h-9zM25 12.300h7v7l-7-1zM33 12.300h9v8.500l-9-1.300z" fill="#fff" /><path d="M57 3v18M59 4h5l2 2h6v9h-6l-2-2h-5" fill="#dfe8cc" stroke="#fff" stroke-width="1.600" /><circle cx="69" cy="17" r="5.500" fill="#d8282c" /><path d="m67 15 4 4M71 15l-4 4" stroke="#fff" stroke-width="1.400" /><path d="M93 4.500h8v16h-8zM95.500 2.500h3M88 3v4M90.500 3v4M86.500 7h5.500v3l-2 1.500V20" fill="none" stroke="#fff" stroke-width="1.700" /><path d="M120 6.500h12v8h-12zM126 15v4M121 20h10M115 3.500h4v5h-4zM117 9v10" fill="none" stroke="#fff" stroke-width="1.600" /><path d="M147 8h3l5-5v18l-5-5h-3z" fill="#fff" /><path d="M158.500 8q3 4 0 8" fill="none" stroke="#fff" stroke-width="1.300" /></svg>
      <div class="clock"><span v-fit="52">2:59 PM</span><span v-fit="60">2/9/2016</span></div>
    </div>
  </div>
</template>

<style>
body { margin: 0; overflow: hidden; }
</style>

<style scoped>
.window { width: 1920px; height: 1080px; display: flex; flex-direction: column; font-family: "Open Sans", "Noto Sans", sans-serif; font-size: 14px; color: #1b1b1b; background: #f0f0f0; overflow: hidden; }
.window span, .window strong { white-space: nowrap; display: inline-block; }
svg { display: block; flex: none; overflow: visible; }
.defs { height: 0; }
.titlebar { height: 28px; background: #a2ce60; border-bottom: 1px solid #86ab52; display: flex; align-items: flex-start; }
.logo { margin: 4px 0 0 2px; }
.title { flex: 1; margin-left: 96px; display: flex; justify-content: center; font-size: 19px; line-height: 30px; color: #283214; }
.winbtns { display: flex; width: 119px; }
.winbtns svg { flex: none; }
.close { width: 58px; height: 23px; background: #c75050; display: flex; align-items: center; justify-content: center; }
.close svg { margin-top: -2px; }

.bars { height: 98px; background: linear-gradient(90deg, #ebebfa, #f2f6fe 75%); display: flex; flex-direction: column; align-items: flex-start; }
.menu { height: 28px; display: flex; align-items: center; font-size: 14.5px; line-height: 28px; }
.strip { background: linear-gradient(#f6f9fd, #dcdfec 45%, #b6b6cc); border-radius: 0 0 4px 0; display: flex; align-items: flex-start; position: relative; box-sizing: border-box; }
.strip::before { content: ""; position: absolute; left: 3px; top: 9px; height: 16px; width: 2px; background: repeating-linear-gradient(#b2b6c4 0 2px, transparent 2px 4px); }
.modes { width: 969px; height: 34px; border-bottom: 1px solid #a7a8ba; }
.tools { width: 1574px; height: 35px; margin-top: 1px; }
.mode { display: flex; align-items: center; height: 33px; box-sizing: border-box; padding-left: 9px; font-size: 14.5px; line-height: 33px; }
.mode.on, .tool.on { background: #d7e8fa; box-shadow: inset 0 0 0 1px #4b97d8; }
.mode svg { width: 24px; }
.tool { height: 33px; display: flex; align-items: center; justify-content: center; flex: none; margin-top: 1px; }
.tool svg { margin-top: -2px; }
.sep { height: 26px; background: linear-gradient(90deg, #b4b6c8 50%, #f4f5fa 50%); width: 2px; margin-top: 6px; }
.view { justify-content: space-between; padding: 0; }
.view span { font-size: 14.5px; margin-top: -1px; }
.down { border: 4px solid transparent; border-top: 5px solid #111; border-bottom: 0; }
.down.big { border-width: 5.500px 5.500px 0; border-top-width: 6px; }

.work { height: 881px; display: flex; background: #f0f0f0; }
.side { width: 401px; display: flex; flex-direction: column; font-family: "Liberation Sans", Arial, sans-serif; font-size: 14px; color: #000; background: #dcdcdc; }
.plan { height: 302px; margin: 1px 2px 4px 1px; box-sizing: border-box; border: solid #6d6d6d; border-width: 1px 0 0 1px; background: #f0f0f0; box-shadow: 1px 1px 0 #fff; }
.planhead { height: 26px; display: flex; justify-content: space-between; align-items: center; padding: 0 11px 0 4px; }
.planbtns { display: flex; gap: 12px; }
.planbtns b { width: 16px; height: 16px; border-radius: 50%; border: 1px solid #6a6a6a; background: radial-gradient(#fff 45%, #bdbdbd); display: flex; align-items: center; justify-content: center; }
.planlist { height: 273px; width: 396px; background: #a0a0a0; border: 1px solid #6b6b6b; border-right-color: #fff; border-bottom-color: #fff; box-sizing: border-box; }
.planrow { height: 21px; background: #3399ff; color: #fff; line-height: 20px; padding-left: 4px; font-size: 13px; }
.filter { height: 404px; margin: 0 2px 4px 1px; box-sizing: border-box; border: solid #6d6d6d; border-width: 1px 0 0 1px; background: #f0f0f0; display: flex; flex-direction: column; }
.checks { display: flex; padding: 9px 0 0 6px; height: 30px; box-sizing: content-box; }
.checks label { display: flex; gap: 4px; height: 16px; align-items: center; }
.tabbox { width: 395px; height: 340px; box-sizing: border-box; border: 1px solid #b0b0b0; border-left-color: #fff; background: #f0f0f0; padding: 2px 0 0 2px; }
.tree { height: 331px; width: 388px; background: #fff; border: 1px solid #808488; }
.root { height: 20px; display: flex; align-items: center; padding-left: 4px; }
.root em { font-style: normal; background: #f0f0f0; height: 18px; line-height: 18px; margin-left: 3px; padding: 0 2px; }
.node { height: 18px; display: flex; align-items: center; padding-left: 7px; }
.root + .node { margin-top: -1px; }
.node strong { margin-left: 4px; font-size: 14px; line-height: 18px; }
.tabs { display: flex; }
.tab { width: 61px; height: 20px; box-sizing: border-box; border: 1px solid #b0b0b0; border-top: 0; display: flex; align-items: center; gap: 6px; padding-left: 4px; padding-bottom: 1px; }
.tab.sel { width: 86px; height: 23px; background: #fff; border: 0; padding-left: 8px; gap: 6px; padding-bottom: 0; }
.form { height: 164px; margin: 0 2px 0 1px; box-sizing: border-box; border: solid #6d6d6d; border-width: 1px 0 0 1px; background: #f0f0f0; overflow: hidden; }
.frow { display: flex; align-items: flex-start; padding-left: 16px; height: 40px; }
.r1 { padding-top: 18px; height: 36px; }
.lab { width: 88px; line-height: 29px; }
.r1 .lab { line-height: 25px; }
.r3 .lab { line-height: 33px; }
.r4 .lab { line-height: 33px; }
.combo { width: 268px; height: 24px; background: #fff; border: 1px solid #ababab; box-sizing: border-box; display: flex; align-items: center; justify-content: flex-end; padding-right: 5px; }
.field { width: 80px; height: 28px; background: #fff; border: 1px solid #a6a6a6; box-sizing: border-box; }
.spin { width: 19px; display: flex; flex-direction: column; margin: 1px 0 0 -1px; }
.spin.low { margin-top: 3px; }
.spin i { height: 13px; border: 1px solid #a8a8a8; box-sizing: border-box; display: flex; align-items: center; justify-content: center; background: #f3f3f3; }
.spin i::after { content: ""; border: 4px solid transparent; }
.spin .u::after { border-bottom-color: #000; border-top: 0; }
.spin .d::after { border-top-color: #000; border-bottom: 0; }
button { margin: 1px 0 0 57px; width: 58px; height: 26px; padding: 0; border: 1px solid #a8a8a8; background: #ececec; font: inherit; color: #000; }
.splitter { width: 5px; background: linear-gradient(90deg, #808080 60%, #6a6a6a 60% 80%, #bbb 80%); }

.canvas { width: 1425px; border-top: 2px solid #707074; box-sizing: border-box; border-right: 1px solid #d0d0d0; border-bottom: 2px solid #e3e3e3; display: flex; flex-direction: column; height: 880px; background: #fff; overflow: hidden; }
.hrow, .vrow { display: flex; }
.corner { background: #dedede; }
.hruler { background: linear-gradient(#a9a9a9, #f4f4f4); }
.vruler { background: linear-gradient(90deg, #a9a9a9, #f4f4f4); }
.hruler, .vruler { overflow: hidden; }
.hruler text, .vruler text { font: 9.5px "Liberation Sans", Arial, sans-serif; fill: #1408d8; }
.map { background: #fff; overflow: hidden; }
.aplabel { font: 16px "Liberation Sans", Arial, sans-serif; fill: #0000c8; }
.dock { flex: 1; margin-left: 5px; background: #f0f0f0; font-family: "Liberation Sans", Arial, sans-serif; color: #000; box-shadow: -5px 0 0 #f4f7fd; }
.dockhead { height: 28px; background: linear-gradient(#bccbdb, #dbe6f2); display: flex; align-items: center; justify-content: flex-end; gap: 8px; padding-right: 6px; }
.unit { display: flex; flex-direction: column; align-items: center; line-height: 18px; font-size: 14px; padding: 8px 0 0; width: 84px; margin-bottom: 15px; }
.legend { display: flex; padding-left: 8px; }
.swatches { width: 24px; display: flex; flex-direction: column; }
.swatches i { height: 17px; }
.nums { margin: -14px 0 0 4px; display: flex; flex-direction: column; font-size: 13.5px; line-height: 34px; }
.nums div { height: 34px; }
.zero { padding-left: 3px; }

.status { height: 24px; background: #f0f0f0; border-top: 1px solid #d7d7d7; box-sizing: border-box; display: flex; font-size: 13.5px; line-height: 25px; }
.status div { box-sizing: border-box; }
.s1 { width: 358px; }
.s2, .s3, .s4, .s5 { border-left: 1px solid #d2d2d2; padding-left: 4px; }
.s2 { width: 355px; }
.s3 { width: 1015px; }
.s4 { width: 96px; padding-left: 3px; }
.s5 { flex: 1; padding-left: 3px; }

.taskbar { height: 48px; background: linear-gradient(90deg, #6d9c28, #6f9e2a 20%, #7ba43c 36%, #7a9f3e 65%, #76a336 75%, #70a524 100%); box-shadow: inset 0 1px 0 #6a9530; display: flex; align-items: center; }
.task { display: flex; align-items: center; justify-content: center; height: 48px; box-sizing: border-box; flex: none; }
.start { width: 60px; }
.btn { background: rgba(255, 255, 255, .2); border: 1px solid rgba(235, 245, 205, .45); width: 70px; }
.b1 { margin-left: 1px; }
.ie { width: 76px; }
.b2 { width: 65px; margin-left: 1px; box-shadow: 4px 0 0 -1px #83ab4c, 5px 0 0 -1px #a9c67c; }
.pulse { width: 82px; margin-left: 1px; }
.radar { width: 54px; margin-left: -1px; margin-right: 15px; }
.b3 { background: linear-gradient(90deg, #b2c98c, #a9c283); border-color: #e4eecb; margin-left: 3px; }
.b4 { margin-left: 3px; }
.b5 { margin-left: 3px; }
.leaf { margin-left: 738px; }
.tray { margin-left: 160px; }
.clock { margin-left: auto; width: 104px; display: flex; flex-direction: column; align-items: center; color: #fff; font-size: 14px; line-height: 22px; padding-top: 3px; }
</style>
